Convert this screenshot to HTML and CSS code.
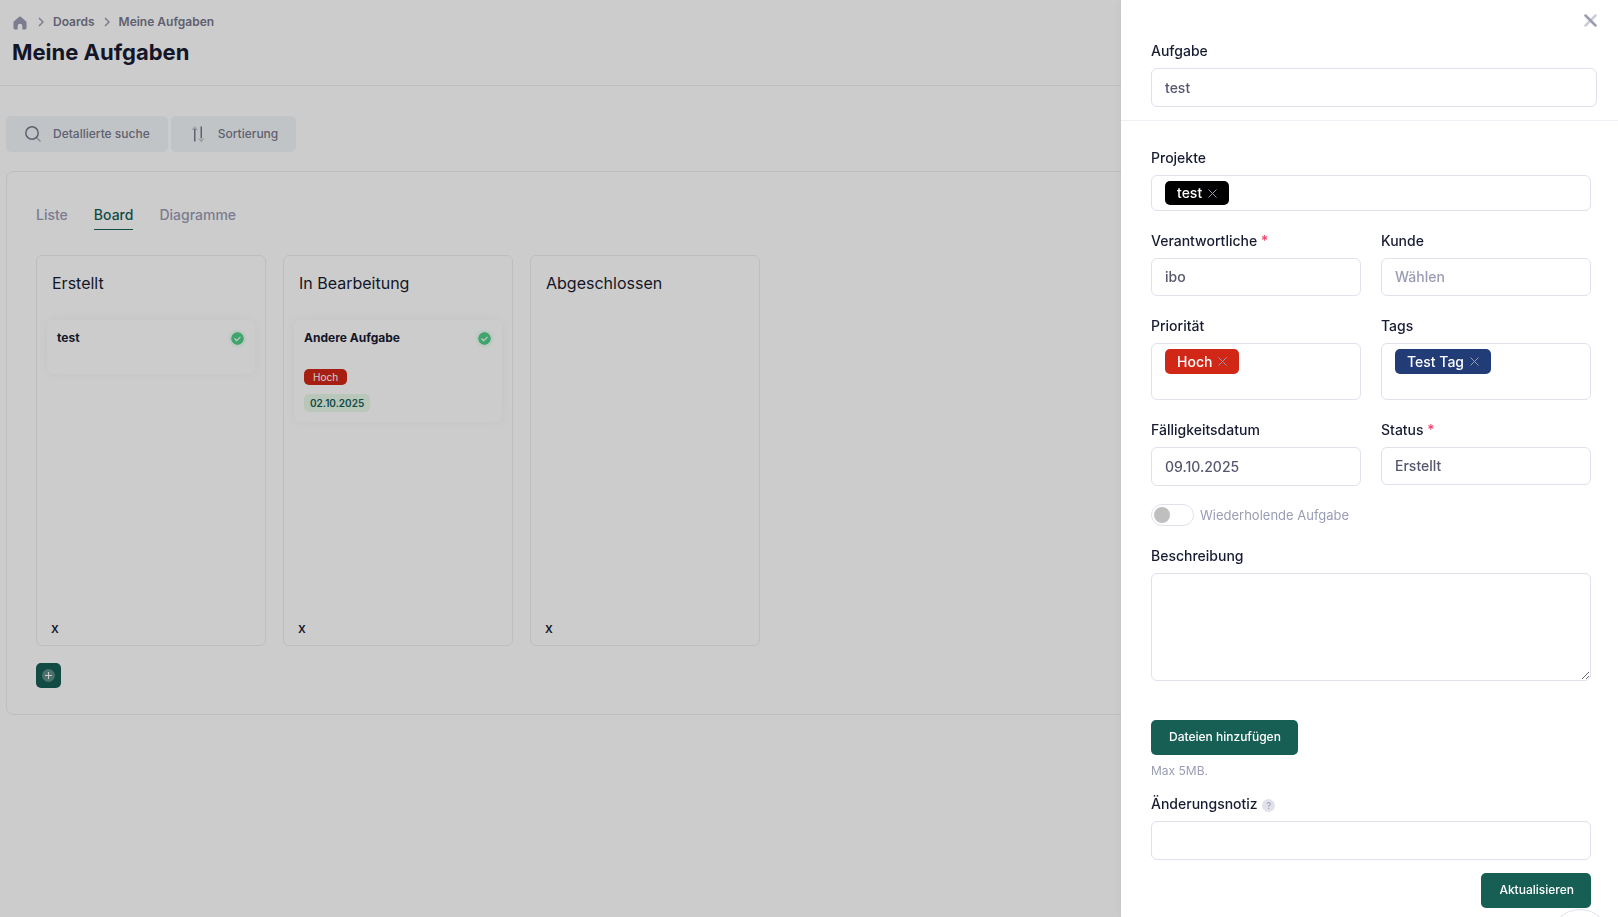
FILE: index.html
```html
<!DOCTYPE html>
<html lang="de">
<head>
    <meta charset="UTF-8">
    <meta name="viewport" content="width=device-width, initial-scale=1.0">
    <title>Meine Aufgaben</title>
    <link rel="stylesheet" href="styles.css">
</head>
<body>
    <header class="page-header">
        <nav class="breadcrumb" aria-label="Breadcrumb">
            <a href="#" class="breadcrumb-home" aria-label="Home">
                <svg width="14" height="14" viewBox="0 0 14 14"><path d="M.5 5.800 5.900 1a1.600 1.600 0 0 1 2.200 0l5.400 4.800v6.100a1.600 1.600 0 0 1-1.600 1.600H9.300V10a2.300 2.300 0 0 0-4.600 0v3.500H2.100A1.600 1.600 0 0 1 .5 11.900z" fill="currentColor"/></svg>
            </a>
            <svg class="breadcrumb-arrow" width="6" height="10" viewBox="0 0 6 10"><path d="M1 1l4 4-4 4" fill="none" stroke="currentColor" stroke-width="1.500"/></svg>
            <a href="#">Doards</a>
            <svg class="breadcrumb-arrow" width="6" height="10" viewBox="0 0 6 10"><path d="M1 1l4 4-4 4" fill="none" stroke="currentColor" stroke-width="1.500"/></svg>
            <span>Meine Aufgaben</span>
        </nav>
        <h1>Meine Aufgaben</h1>
    </header>

    <main class="content">
        <div class="toolbar">
            <button type="button" class="btn-light">
                <svg width="18" height="18" viewBox="0 0 18 18" fill="none" stroke="currentColor"><circle cx="8" cy="8" r="6.200" stroke-width="1.500"/><path d="M12.500 12.500l4 4" stroke-width="1.500" opacity=".6"/></svg>
                Detallierte suche
            </button>
            <button type="button" class="btn-light">
                <svg width="18" height="18" viewBox="0 0 18 18"><path d="M5 4h1.500v12.500H5zM11.500 1.500H13V13h-1.500z" fill="currentColor"/><path d="M5.750 1L9 5H2.500zM12.250 17.500L9 13.500h6.500z" fill="currentColor" opacity=".35"/></svg>
                Sortierung
            </button>
        </div>

        <section class="panel">
            <nav class="tabs">
                <a href="#" class="tab">Liste</a>
                <a href="#" class="tab active">Board</a>
                <a href="#" class="tab">Diagramme</a>
            </nav>

            <div class="board">
                <section class="column">
                    <h2>Erstellt</h2>
                    <article class="card">
                        <div class="card-head">
                            <h3>test</h3>
                            <svg class="check" width="13" height="13" viewBox="0 0 13 13"><circle cx="6.500" cy="6.500" r="6.500" fill="#50cd89"/><path d="M3.500 6.500l2.200 2.200 3.800-3.800" fill="none" stroke="#fff" stroke-width="1.100"/></svg>
                        </div>
                    </article>
                    <button type="button" class="column-remove">x</button>
                </section>

                <section class="column">
                    <h2>In Bearbeitung</h2>
                    <article class="card">
                        <div class="card-head">
                            <h3>Andere Aufgabe</h3>
                            <svg class="check" width="13" height="13" viewBox="0 0 13 13"><circle cx="6.500" cy="6.500" r="6.500" fill="#50cd89"/><path d="M3.500 6.500l2.200 2.200 3.800-3.800" fill="none" stroke="#fff" stroke-width="1.100"/></svg>
                        </div>
                        <div class="card-badges">
                            <span class="badge badge-high">Hoch</span>
                            <span class="badge badge-date">02.10.2025</span>
                        </div>
                    </article>
                    <button type="button" class="column-remove">x</button>
                </section>

                <section class="column">
                    <h2>Abgeschlossen</h2>
                    <button type="button" class="column-remove">x</button>
                </section>
            </div>

            <button type="button" class="btn-add" aria-label="Spalte hinzufügen">
                <svg width="13" height="13" viewBox="0 0 13 13"><circle cx="6.500" cy="6.500" r="6.500" fill="#fff" opacity=".3"/><path d="M6.500 3v7M3 6.500h7" stroke="#fff" stroke-width="1.100"/></svg>
            </button>
        </section>
    </main>

    <div class="overlay"></div>

    <aside class="drawer">
        <form>
            <div class="drawer-header">
                <button type="button" class="drawer-close" aria-label="Schließen">
                    <svg width="13" height="13" viewBox="0 0 13 13" fill="none" stroke="currentColor" stroke-width="2.500" stroke-linecap="round"><path d="M11.500 1.500l-10 10" opacity=".5"/><path d="M1.500 1.500l10 10"/></svg>
                </button>
                <div class="field">
                    <label for="title">Aufgabe</label>
                    <input type="text" id="title" class="control" value="test">
                </div>
            </div>

            <div class="drawer-body">
                <div class="field">
                    <label for="projects">Projekte</label>
                    <div class="multi">
                        <span class="tag tag-project">test <button type="button" aria-label="test entfernen"><svg width="9" height="9" viewBox="0 0 9 9"><path d="M.5.5l8 8M8.500.5l-8 8" stroke="currentColor"/></svg></button></span>
                        <input type="text" id="projects">
                    </div>
                </div>

                <div class="field-row">
                    <div class="field">
                        <label for="responsible">Verantwortliche <span class="required">*</span></label>
                        <select id="responsible" class="control">
                            <option>ibo</option>
                        </select>
                    </div>
                    <div class="field">
                        <label for="customer">Kunde</label>
                        <select id="customer" class="control placeholder">
                            <option>Wählen</option>
                        </select>
                    </div>
                </div>

                <div class="field-row">
                    <div class="field">
                        <label for="priority">Priorität</label>
                        <div class="multi multi-tall">
                            <span class="tag tag-high">Hoch <button type="button" aria-label="Hoch entfernen"><svg width="9" height="9" viewBox="0 0 9 9"><path d="M.5.5l8 8M8.500.5l-8 8" stroke="currentColor"/></svg></button></span>
                            <input type="text" id="priority">
                        </div>
                    </div>
                    <div class="field">
                        <label for="tags">Tags</label>
                        <div class="multi multi-tall">
                            <span class="tag tag-blue">Test Tag <button type="button" aria-label="Test Tag entfernen"><svg width="9" height="9" viewBox="0 0 9 9"><path d="M.5.5l8 8M8.500.5l-8 8" stroke="currentColor"/></svg></button></span>
                            <input type="text" id="tags">
                        </div>
                    </div>
                </div>

                <div class="field-row">
                    <div class="field">
                        <label for="due-date">Fälligkeitsdatum</label>
                        <input type="text" id="due-date" class="control" value="09.10.2025">
                    </div>
                    <div class="field">
                        <label for="status">Status <span class="required">*</span></label>
                        <select id="status" class="control">
                            <option>Erstellt</option>
                        </select>
                    </div>
                </div>

                <div class="switch">
                    <input type="checkbox" id="recurring">
                    <label for="recurring">Wiederholende Aufgabe</label>
                </div>

                <div class="field">
                    <label for="description">Beschreibung</label>
                    <textarea id="description" class="control"></textarea>
                </div>

                <div class="upload">
                    <button type="button" class="btn-primary">Dateien hinzufügen</button>
                    <p class="hint">Max 5MB.</p>
                </div>

                <div class="field field-note">
                    <label for="note">Änderungsnotiz <span class="help">?</span></label>
                    <input type="text" id="note" class="control">
                </div>

                <div class="actions">
                    <button type="submit" class="btn-primary">Aktualisieren</button>
                </div>
            </div>
        </form>
        <div class="bubble"></div>
    </aside>
</body>
</html>
```

FILE: styles.css
```css
* {
    box-sizing: border-box;
}

body {
    font-family: Inter, Arial, sans-serif;
    font-size: 14px;
    line-height: 20px;
    margin: 0;
    color: #181c32;
    background: #fff;
}

h1, h2, h3, p {
    margin: 0;
}

a {
    color: inherit;
    text-decoration: none;
}

button, input, select, textarea {
    font-family: inherit;
    font-size: inherit;
    margin: 0;
}

button {
    border: none;
    cursor: pointer;
}

svg {
    display: block;
    flex: none;
}

/* page header */
.page-header {
    padding: 12px 12px 18px;
    border-bottom: 1px solid #eeeef2;
}

.breadcrumb {
    display: flex;
    align-items: center;
    gap: 9px;
    font-size: 12px;
    font-weight: 600;
    color: #78788c;
}

.breadcrumb-home {
    padding: 2px 2px 0 1px;
    color: #9a9cb4;
}

.breadcrumb-arrow {
    color: #9a9cb4;
}

h1 {
    margin-top: 5px;
    font-size: 22px;
    line-height: 30px;
    font-weight: 700;
}

/* board page */
.content {
    padding: 30px 6px;
}

.toolbar {
    display: flex;
    gap: 3px;
    margin-bottom: 19px;
}

.btn-light {
    display: flex;
    align-items: center;
    gap: 11px;
    height: 36px;
    padding: 0 18px 2px;
    border-radius: 5px;
    background: #f1f6f8;
    color: #78788c;
    font-size: 12px;
    font-weight: 500;
}

.btn-light svg {
    margin-top: 2px;
}

.panel {
    padding: 32px 29px 26px;
    border: 1px solid #eeeef2;
    border-radius: 8px;
}

.tabs {
    display: flex;
    gap: 26px;
    margin-bottom: 25px;
}

.tab {
    padding: 1px 0 4px;
    border-bottom: 1px solid transparent;
    font-weight: 500;
    color: #9a9cb4;
}

.tab.active {
    color: #175e54;
    border-color: #175e54;
}

.board {
    display: flex;
    gap: 17px;
}

.column {
    display: flex;
    flex-direction: column;
    width: 230px;
    min-height: 391px;
    padding: 15px 10px 7px;
    border: 1px solid #eeeef2;
    border-radius: 6px;
}

.column h2 {
    margin: 0 5px 25px;
    font-size: 16px;
    line-height: 24px;
    font-weight: 400;
}

.card {
    min-height: 54px;
    padding: 8px 10px 10px;
    border-radius: 6px;
    background: #fff;
    box-shadow: 0 0 12px rgba(0, 0, 0, 0.04);
}

.card-head {
    display: flex;
    align-items: center;
    justify-content: space-between;
}

.card-head h3 {
    font-size: 12px;
    font-weight: 700;
}

.check {
    margin-right: 1px;
    border-radius: 50%;
    box-shadow: 0 0 4px #bdf0d3;
}

.card-badges {
    display: flex;
    flex-direction: column;
    align-items: flex-start;
    gap: 9px;
    margin-top: 21px;
}

.badge {
    padding: 0 9px;
    border-radius: 5px;
    font-size: 10px;
    line-height: 16px;
}

.badge-high {
    background: #d12717;
    color: #fff;
}

.badge-date {
    padding: 1px 6px;
    background: #e8f8e9;
    color: #175e54;
    font-weight: 600;
}

.column-remove {
    align-self: flex-start;
    margin-top: auto;
    padding: 0 4px;
    background: none;
    color: inherit;
    line-height: 20px;
    font-weight: 500;
}

.btn-add {
    display: flex;
    align-items: center;
    justify-content: center;
    width: 25px;
    height: 25px;
    margin-top: 17px;
    padding: 0;
    border-radius: 5px;
    background: #175e54;
}

.overlay {
    position: fixed;
    inset: 0;
    background: rgba(0, 0, 0, 0.2);
}

/* task drawer */
.drawer {
    position: fixed;
    top: 0;
    right: 0;
    bottom: 0;
    width: 497px;
    overflow: hidden;
    background: #fff;
    box-shadow: 0 0 12px rgba(0, 0, 0, 0.06);
}

.drawer-header {
    display: flex;
    flex-direction: column;
    padding: 14px 21px 13px 30px;
    border-bottom: 1px solid #eeeef4;
}

.drawer-close {
    align-self: flex-end;
    margin-bottom: 14px;
    padding: 0;
    background: none;
    color: #9a9cb4;
}

.drawer-body {
    padding: 27px 27px 8px 30px;
}

.field {
    flex: 1;
    margin-bottom: 20px;
    min-width: 0;
}

.drawer-header .field {
    margin-bottom: 0;
}

.field-row {
    display: flex;
    gap: 20px;
}

.field label {
    display: block;
    margin-bottom: 7px;
    font-weight: 500;
}

.required {
    color: #f1416c;
}

.control {
    display: block;
    width: 100%;
    height: 39px;
    padding: 0 13px;
    border: 1px solid #e1e1ee;
    border-radius: 6px;
    background: #fff;
    color: #56566f;
    font-weight: 500;
    appearance: none;
    outline: none;
}

select.control {
    height: 38px;
    padding-bottom: 2px;
}

textarea.control {
    height: 108px;
    padding: 10px 13px;
    resize: vertical;
}

.control.placeholder {
    color: #9a9cb4;
}

.multi {
    display: flex;
    flex-wrap: wrap;
    align-items: flex-start;
    min-height: 36px;
    padding: 5px 13px;
    border: 1px solid #e1e1ee;
    border-radius: 6px;
}

.multi input {
    flex: 1;
    min-width: 0;
    height: 24px;
    padding: 0;
    border: none;
    background: none;
    outline: none;
}

.multi-tall input {
    flex-basis: 100%;
    height: 20px;
}

.tag {
    display: flex;
    align-items: center;
    gap: 6px;
    height: 24px;
    padding: 0 12px;
    border-radius: 5px;
    color: #fff;
    font-weight: 500;
}

.multi-tall .tag {
    height: 25px;
}

.tag button {
    padding: 0;
    background: none;
    color: #9a9cb4;
}

.tag-project {
    background: #000;
}

.tag-high {
    background: #d12717;
}

.tag-blue {
    background: #223c78;
}

.switch {
    display: flex;
    align-items: center;
    gap: 6px;
    margin: -2px 0 20px;
    font-size: 13px;
    color: #9a9cb4;
}

.switch input {
    width: 43px;
    height: 22px;
    padding: 2px;
    border: 1px solid #e1e1ee;
    border-radius: 11px;
    appearance: none;
}

.switch input::before {
    content: "";
    display: block;
    width: 16px;
    height: 16px;
    border-radius: 50%;
    background: #bfbfbf;
}

.switch input:checked::before {
    margin-left: auto;
    background: #175e54;
}

.upload {
    margin: 39px 0 15px;
}

.btn-primary {
    height: 35px;
    padding: 0 17px 2px 18px;
    border-radius: 5px;
    background: #175e54;
    color: #fff;
    font-size: 12px;
    font-weight: 500;
}

.hint {
    margin-top: 8px;
    font-size: 12px;
    line-height: 16px;
    color: #9a9cb4;
}

.field-note {
    margin-bottom: 13px;
}

.help {
    display: inline-block;
    width: 13px;
    margin-left: 1px;
    border-radius: 50%;
    background: #e1e1e9;
    color: #9a9cb4;
    font-size: 9px;
    line-height: 13px;
    text-align: center;
}

.actions {
    display: flex;
    justify-content: flex-end;
}

/* chat bubble peeking in from the bottom edge */
.bubble {
    position: absolute;
    right: 8px;
    bottom: -52px;
    width: 60px;
    height: 60px;
    border: 1px solid #e1e1ee;
    border-radius: 50%;
    background: #fff;
}
```
